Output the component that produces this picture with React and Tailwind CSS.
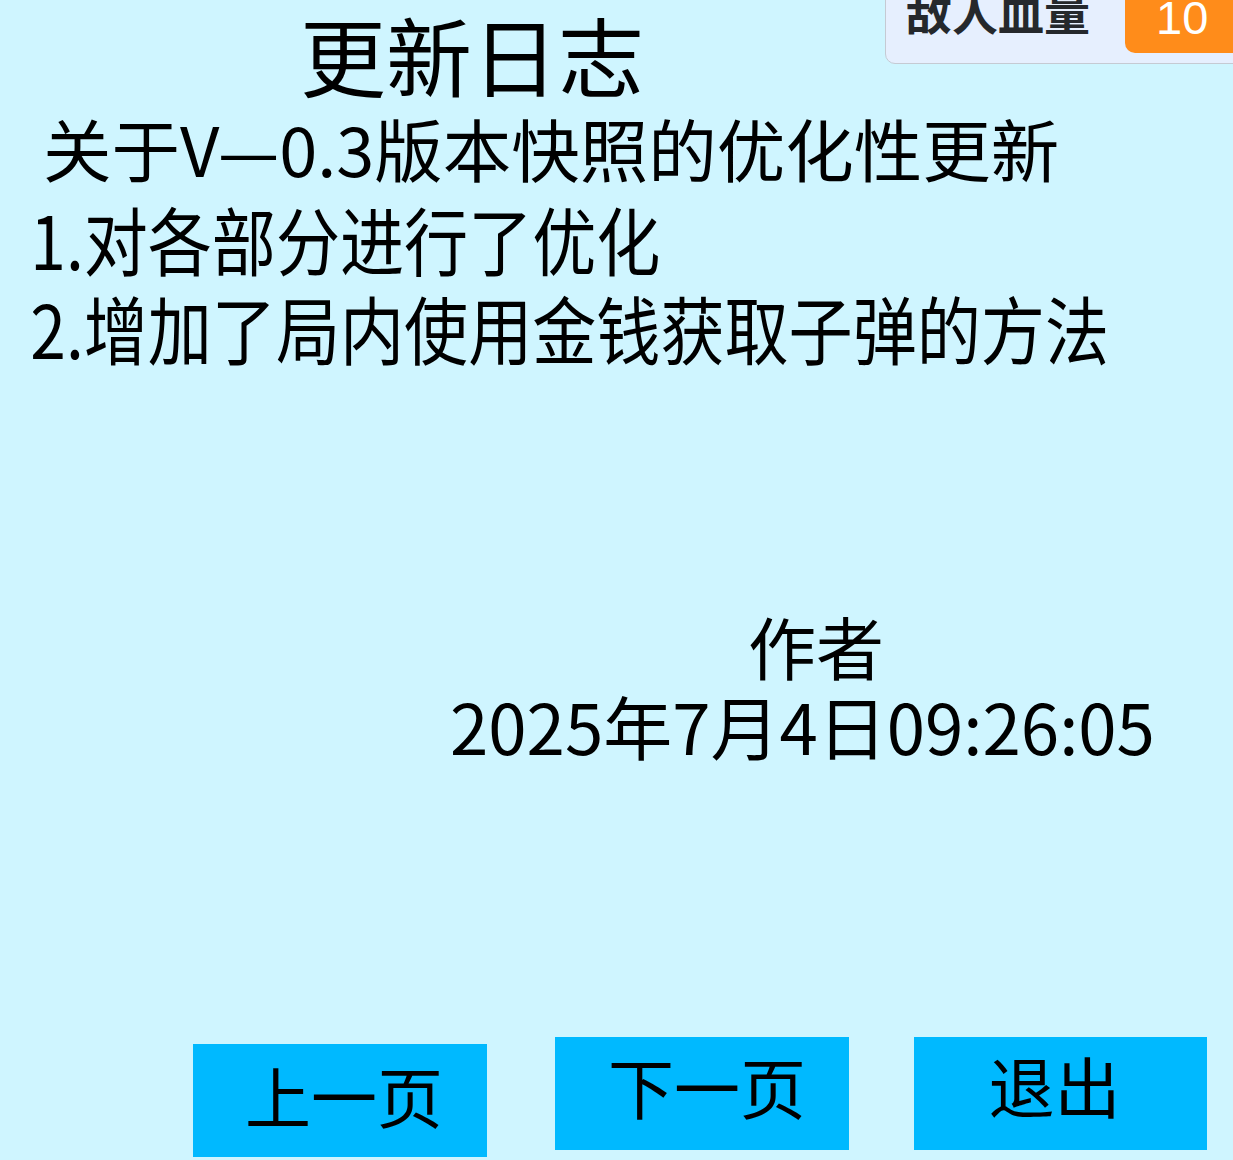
export default function App() {
  const cjk = { fontFamily: '"Noto Sans CJK SC", "Noto Sans", sans-serif' };
  return (
    <div className="relative w-[1233px] h-[1160px] overflow-hidden bg-[#cff5ff] text-black" style={cjk}>
      {/* monitor overlay */}
      <div className="absolute left-[885px] top-[-10px] w-[370px] h-[74px] bg-[#e6effe] border border-[#c5cad3] rounded-bl-[10px] flex items-start">
        <div className="shrink-0 whitespace-nowrap mt-[-4px] ml-[20px] text-[46px] leading-none font-bold text-[#25282c]" style={{ fontFamily: '"Noto Sans CJK SC", sans-serif' }}>敌人血量</div>
        <div className="shrink-0 ml-[35px] w-[130px] h-[62px] bg-[#ff8c1a] rounded-bl-[10px] text-white text-[47px] leading-none pl-[31px] pt-[3px]" style={{ fontFamily: '"Liberation Sans", Arial, sans-serif' }}>10</div>
      </div>

      <div className="flex flex-col">
        <div className="mt-[11px] pl-[300px] text-[86px] leading-none">更新日志</div>
        <div className="mt-[17px] pl-[43px] text-[68.5px] leading-none whitespace-nowrap">关于V—0.3版本快照的优化性更新</div>
        <div className="mt-[18px] pl-[35px] text-[74px] leading-none whitespace-nowrap origin-left scale-x-[0.866]">1.对各部分进行了优化</div>
        <div className="mt-[15px] pl-[35px] text-[74px] leading-none whitespace-nowrap origin-left scale-x-[0.866]">2.增加了局内使用金钱获取子弹的方法</div>
        <div className="mt-[248px] pl-[748px] text-[68px] leading-none">作者</div>
        <div className="mt-[11px] pl-[450px] text-[69px] leading-none whitespace-nowrap">2025年7月4日09:26:05</div>
      </div>

      <div className="absolute left-0 right-0 top-[1037px] flex items-start pl-[193px]">
        <div className="mt-[7px] w-[294px] h-[113px] bg-[#00b9ff] flex items-center justify-center text-[66px] leading-none pl-[8px] pb-[14px]">上一页</div>
        <div className="ml-[68px] w-[294px] h-[113px] bg-[#00b9ff] flex items-center justify-center text-[66px] leading-none pl-[10px] pb-[18px]">下一页</div>
        <div className="ml-[65px] w-[293px] h-[113px] bg-[#00b9ff] flex items-center justify-center text-[66px] leading-none pr-[12px] pb-[20px]">退出</div>
      </div>
    </div>
  );
}
